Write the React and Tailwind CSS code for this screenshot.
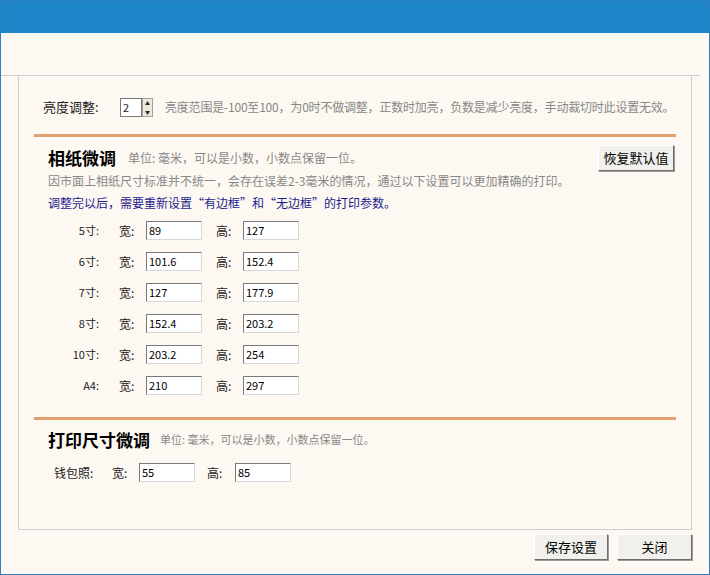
import React from 'react';

const F = { fontFamily: '"Noto Sans CJK SC", sans-serif' };

const Input = ({ v, w = 'w-[56px]' }) => (
  <div className={`${w} h-[19px] bg-white border border-t-[#7a7a7a] border-l-[#7a7a7a] border-r-[#d8d8d8] border-b-[#d8d8d8] text-[11px] leading-[17px] pl-[2px] text-black`}>{v}</div>
);

const Btn = ({ children, w }) => (
  <div className={`${w} h-[26px] bg-[#f1f0ec] border border-t-white border-l-white border-r-[#6e6e6e] border-b-[#6e6e6e] shadow-[1px_1px_0_#9a9a9a] flex items-center justify-center text-[13px] text-black`}>{children}</div>
);

const rows = [
  ['5寸', '89', '127'],
  ['6寸', '101.6', '152.4'],
  ['7寸', '127', '177.9'],
  ['8寸', '152.4', '203.2'],
  ['10寸', '203.2', '254'],
  ['A4', '210', '297'],
];

export default function App() {
  return (
    <div style={F} className="w-[710px] h-[575px] border border-[#2a80c0] bg-[#fdf8f2] flex flex-col text-[12px] text-[#222]">
      <div className="h-[32px] bg-[#1e86c8] shrink-0" />
      <div className="h-[43px] border-b border-[#cfcfcf] shrink-0 mr-[9px]" />
      <div className="ml-[17px] mr-[17px] h-[454px] border-l border-r border-b border-[#cfcfcf] flex flex-col">
        <div className="flex items-center h-[22px] mt-[20px] pl-[24px]">
          <span className="text-[13px] w-[77px]">亮度调整:</span>
          <div className="flex">
            <div className="w-[22px] h-[19px] bg-white border border-[#7a7a7a] text-[11px] leading-[17px] pl-[2px]">2</div>
            <div className="w-[11px] h-[19px] flex flex-col border border-[#a0a0a0] bg-[#ece9d8]">
              <div className="flex-1 flex items-center justify-center text-[5px] leading-none">▲</div>
              <div className="flex-1 flex items-center justify-center text-[5px] leading-none">▼</div>
            </div>
          </div>
          <span className="ml-[12px] text-[#888] text-[12px] tracking-[-0.2px]">亮度范围是-100至100，为0时不做调整，正数时加亮，负数是减少亮度，手动裁切时此设置无效。</span>
        </div>
        <div className="mx-[15px] mt-[16px] h-[3px] bg-[#e0a070]" />
        <div className="flex items-center pl-[29px] pr-[17px] mt-[8px] h-[25px]">
          <span className="text-[17px] font-bold text-black">相纸微调</span>
          <span className="ml-[12px] text-[#888]">单位: 毫米，可以是小数，小数点保留一位。</span>
          <div className="ml-auto"><Btn w="w-[76px]">恢复默认值</Btn></div>
        </div>
        <div className="pl-[29px] text-[#888] leading-[22px]">因市面上相纸尺寸标准并不统一，会存在误差2-3毫米的情况，通过以下设置可以更加精确的打印。</div>
        <div className="pl-[29px] text-[#1c1c8c] leading-[22px]">调整完以后，需要重新设置“有边框”和“无边框”的打印参数。</div>
        <div className="flex flex-col gap-[12px] mt-[7px]">
          {rows.map(([l, w, h]) => (
            <div key={l} className="flex items-center h-[19px]">
              <span className="w-[80px] text-right text-[11px]">{l}:</span>
              <span className="ml-[20px] w-[27px]">宽:</span>
              <Input v={w} />
              <span className="ml-[14px] w-[27px]">高:</span>
              <Input v={h} />
            </div>
          ))}
        </div>
        <div className="mx-[15px] mt-[22px] h-[3px] bg-[#e0a070]" />
        <div className="flex items-center pl-[29px] mt-[7px] h-[25px]">
          <span className="text-[17px] font-bold text-black">打印尺寸微调</span>
          <span className="ml-[10px] text-[#888] text-[11px]">单位: 毫米，可以是小数，小数点保留一位。</span>
        </div>
        <div className="flex items-center h-[19px] mt-[11px] pl-[35px]">
          <span className="w-[58px]">钱包照:</span>
          <span className="w-[27px]">宽:</span>
          <Input v="55" />
          <span className="ml-[12px] w-[28px]">高:</span>
          <Input v="85" />
        </div>
      </div>
      <div className="flex justify-end gap-[9px] mr-[17px] mt-[4px]">
        <Btn w="w-[74px]">保存设置</Btn>
        <Btn w="w-[75px]">关闭</Btn>
      </div>
    </div>
  );
}
